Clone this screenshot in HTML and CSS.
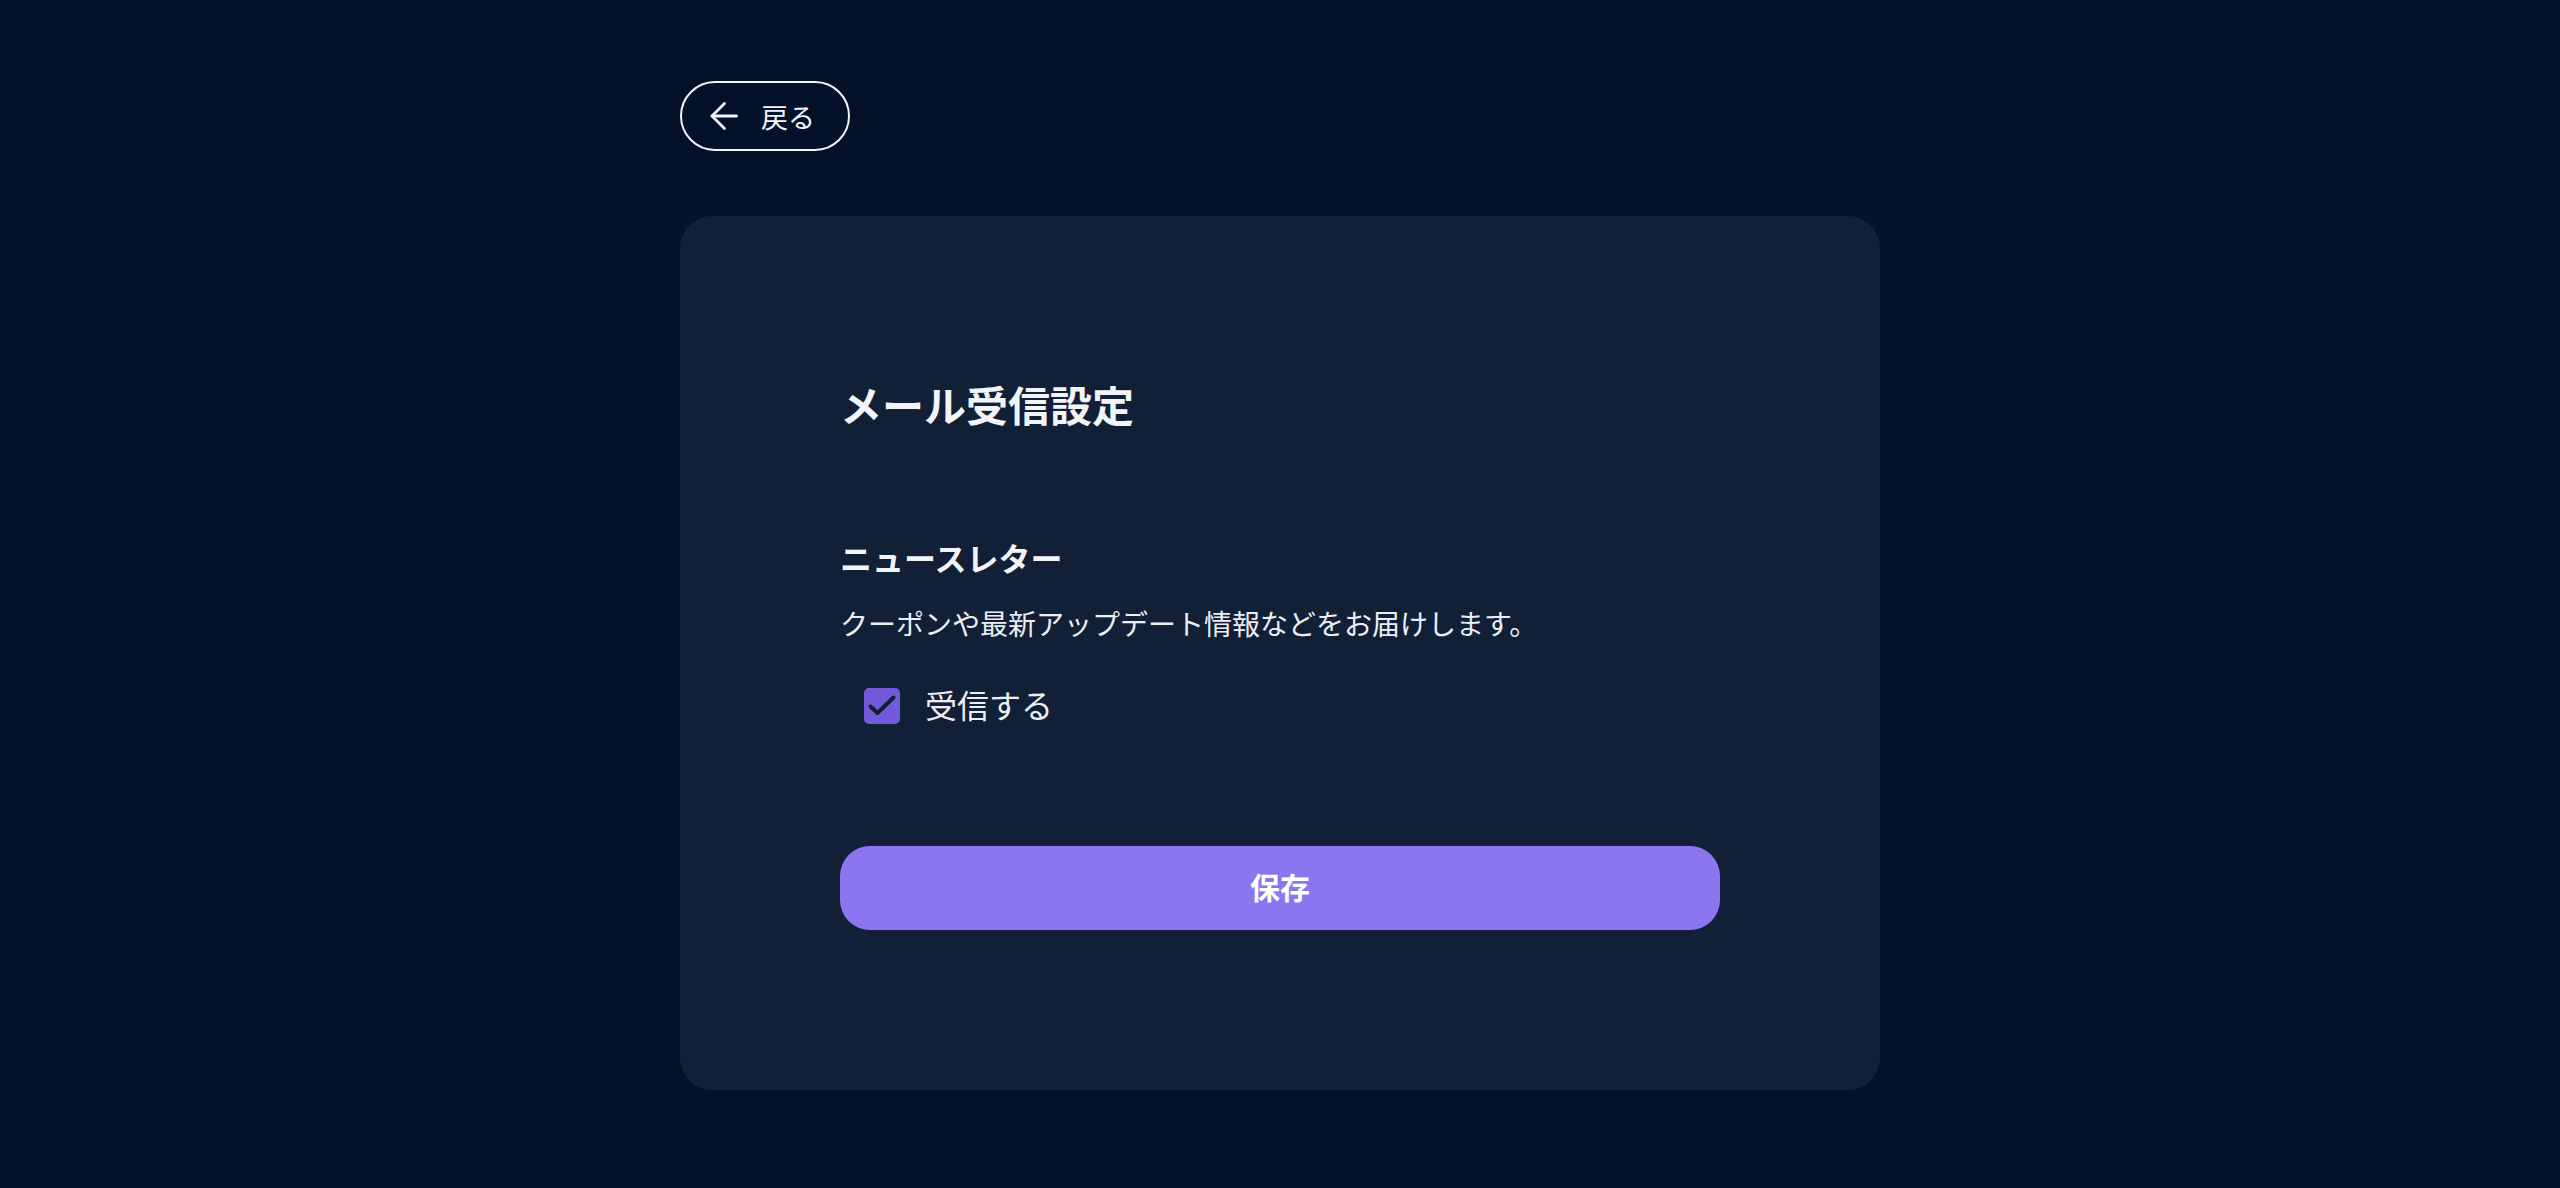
FILE: index.html
```html
<!DOCTYPE html>
<html lang="ja">
<head>
<meta charset="utf-8">
<title>メール受信設定</title>
<link rel="stylesheet" href="styles.css">
</head>
<body>
<main class="page">
  <a class="back" href="#">
    <svg class="back-icon" width="28" height="28" viewBox="0 0 28 28" fill="none" stroke="currentColor" stroke-width="2.8" stroke-linecap="round" stroke-linejoin="round" aria-hidden="true">
      <path d="M26.5 14H2"/>
      <path d="M14.5 1.5 2 14l12.5 12.5"/>
    </svg>
    <span>戻る</span>
  </a>
  <section class="card">
    <h1 class="title">メール受信設定</h1>
    <div class="group">
      <h2 class="group-title">ニュースレター</h2>
      <p class="group-desc">クーポンや最新アップデート情報などをお届けします。</p>
      <label class="check">
        <span class="check-box">
          <svg width="36" height="36" viewBox="0 0 36 36" fill="none" stroke="#111f37" stroke-width="4" stroke-linecap="round" stroke-linejoin="round" aria-hidden="true">
            <path d="M6.5 18.5 13.5 25 29.5 9.5"/>
          </svg>
        </span>
        <span class="check-label">受信する</span>
      </label>
    </div>
    <button class="save" type="button">保存</button>
  </section>
</main>
</body>
</html>
```

FILE: styles.css
```css
html, body {
  margin: 0;
  padding: 0;
  background: #03112b;
  color: #f2f4f8;
  font-family: "Noto Sans CJK JP", "Noto Sans", sans-serif;
}

.page {
  width: 1200px;
  margin: 0 auto;
  padding-top: 81px;
  display: flex;
  flex-direction: column;
  align-items: flex-start;
}

.back {
  display: flex;
  align-items: center;
  gap: 23px;
  box-sizing: border-box;
  height: 70px;
  padding: 0 33px 0 28px;
  border: 2px solid #f2f4f8;
  border-radius: 35px;
  color: #f2f4f8;
  text-decoration: none;
  font-size: 27px;
  line-height: 1;
}

.back-icon {
  display: block;
}

.card {
  margin-top: 65px;
  box-sizing: border-box;
  width: 1200px;
  padding: 160px 160px;
  background: #111f37;
  border-radius: 32px;
  display: flex;
  flex-direction: column;
}

.title {
  margin: 0;
  font-size: 42px;
  font-weight: 700;
  line-height: 55px;
  color: #f2f4f8;
}

.group {
  margin-top: 104px;
  display: flex;
  flex-direction: column;
}

.group-title {
  margin: 0;
  font-size: 32px;
  font-weight: 700;
  line-height: 45px;
}

.group-desc {
  margin: 23px 0 0;
  font-size: 28px;
  line-height: 40px;
  color: #eceef4;
}

.check {
  margin-top: 41px;
  margin-left: 24px;
  display: flex;
  align-items: center;
  gap: 25px;
}

.check-box {
  width: 36px;
  height: 36px;
  border-radius: 5px;
  background: #7259d9;
  display: block;
}

.check-box svg {
  display: block;
}

.check-label {
  font-size: 32px;
  line-height: 40px;
  padding-bottom: 3px;
  color: #eceef4;
}

.save {
  margin-top: 119px;
  width: 880px;
  height: 84px;
  padding: 0 0 5px;
  border: none;
  border-radius: 30px;
  background: #8b76f0;
  color: #ffffff;
  font-family: "Noto Sans CJK JP", "Noto Sans", sans-serif;
  font-size: 30px;
  font-weight: 700;
  cursor: pointer;
}
```
